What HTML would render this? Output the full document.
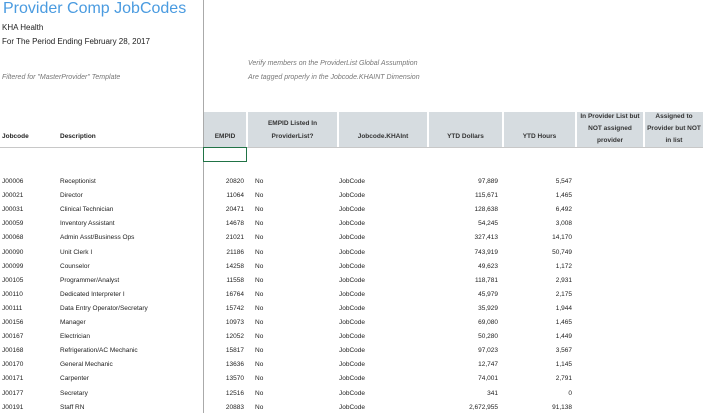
<!DOCTYPE html>
<html><head><style>
body{margin:0;width:703px;height:413px;overflow:hidden;background:#fff;font-family:"Liberation Sans",sans-serif;color:#222;position:relative}
.a{position:absolute;white-space:nowrap}
.t{font-size:16px;color:#4a9be0;left:3px;top:0px}
.s{font-size:8px}
.i{font-size:7px;font-style:italic;color:#777}
.h{position:absolute;background:#d6dce0;top:112px;height:35px;font-size:6.5px;font-weight:bold;color:#333;text-align:center;display:flex;align-items:flex-end;justify-content:center;line-height:13px}
.r{font-size:6.5px;position:absolute}
</style></head><body>
<div class="a t">Provider Comp JobCodes</div>
<div class="a s" style="left:2px;top:23px">KHA Health</div>
<div class="a s" style="left:2px;top:37px">For The Period Ending February 28, 2017</div>
<div class="a i" style="left:2px;top:74px">Filtered for "MasterProvider" Template</div>
<div class="a i" style="left:248px;top:60px">Verify members on the ProviderList Global Assumption</div>
<div class="a i" style="left:248px;top:74px">Are tagged properly in the Jobcode.KHAINT Dimension</div>
<div style="position:absolute;left:203px;top:0;width:1px;height:413px;background:#aaa"></div>
<div class="h" style="left:204px;width:42px;padding-bottom:4px;height:31px">EMPID</div>
<div class="h" style="left:248px;width:89px;padding-bottom:4px;height:31px">EMPID Listed In<br>ProviderList?</div>
<div class="h" style="left:339px;width:88px;padding-bottom:4px;height:31px">Jobcode.KHAInt</div>
<div class="h" style="left:429px;width:73px;padding-bottom:4px;height:31px">YTD Dollars</div>
<div class="h" style="left:504px;width:71px;padding-bottom:4px;height:31px">YTD Hours</div>
<div class="h" style="left:577px;width:66px;line-height:12px">In Provider List but<br>NOT assigned<br>provider</div>
<div class="h" style="left:645px;width:58px;line-height:12px">Assigned to<br>Provider but NOT<br>in list</div>
<div class="a" style="left:2px;top:133px;font-size:6.5px;font-weight:bold">Jobcode</div>
<div class="a" style="left:60px;top:133px;font-size:6.5px;font-weight:bold">Description</div>
<div style="position:absolute;left:0;top:147px;width:703px;height:1px;background:#c8c8c8"></div>
<div style="position:absolute;left:203px;top:147px;width:42px;height:13px;border:1px solid #217346"></div>
<div id="rows"></div>
<script>
var d=[["J00006","Receptionist","20820","97,889","5,547"],["J00021","Director","11064","115,671","1,465"],["J00031","Clinical Technician","20471","128,638","6,492"],["J00059","Inventory Assistant","14678","54,245","3,008"],["J00068","Admin Asst/Business Ops","21021","327,413","14,170"],["J00090","Unit Clerk I","21186","743,919","50,749"],["J00099","Counselor","14258","49,623","1,172"],["J00105","Programmer/Analyst","11558","118,781","2,931"],["J00110","Dedicated Interpreter I","16764","45,979","2,175"],["J00111","Data Entry Operator/Secretary","15742","35,929","1,944"],["J00156","Manager","10973","69,080","1,465"],["J00167","Electrician","12052","50,280","1,449"],["J00168","Refrigeration/AC Mechanic","15817","97,023","3,567"],["J00170","General Mechanic","13636","12,747","1,145"],["J00171","Carpenter","13570","74,001","2,791"],["J00177","Secretary","12516","341","0"],["J00191","Staff RN","20883","2,672,955","91,138"]];
var h="";d.forEach(function(r,i){var y=178+i*14.1;
h+='<div class="r" style="left:2px;top:'+y+'px">'+r[0]+'</div><div class="r" style="left:60px;top:'+y+'px">'+r[1]+'</div><div class="r" style="right:459px;top:'+y+'px">'+r[2]+'</div><div class="r" style="left:255px;top:'+y+'px">No</div><div class="r" style="left:339px;top:'+y+'px">JobCode</div><div class="r" style="right:205px;top:'+y+'px">'+r[3]+'</div><div class="r" style="right:131px;top:'+y+'px">'+r[4]+'</div>';});
document.getElementById("rows").innerHTML=h;
</script>
</body></html>
